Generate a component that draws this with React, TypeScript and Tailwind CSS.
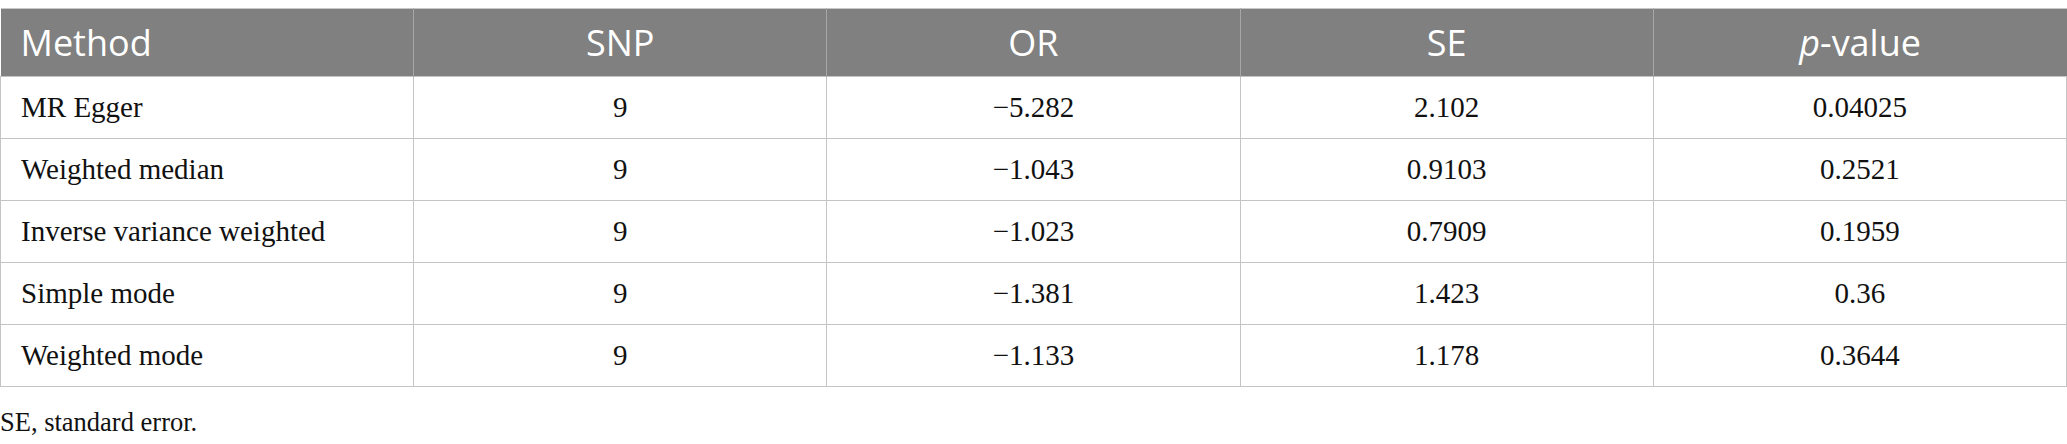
const rows = [
  { method: "MR Egger", snp: "9", or: "\u22125.282", se: "2.102", p: "0.04025" },
  { method: "Weighted median", snp: "9", or: "\u22121.043", se: "0.9103", p: "0.2521" },
  { method: "Inverse variance weighted", snp: "9", or: "\u22121.023", se: "0.7909", p: "0.1959" },
  { method: "Simple mode", snp: "9", or: "\u22121.381", se: "1.423", p: "0.36" },
  { method: "Weighted mode", snp: "9", or: "\u22121.133", se: "1.178", p: "0.3644" },
];

export default function App() {
  return (
    <div className="w-[2067px] h-[444px] bg-white pt-[8px]">
      <table className="w-full table-fixed border-collapse">
        <thead>
          <tr className="h-[68px] bg-[#808080] text-white text-[36px] font-['Open_Sans',sans-serif] border-t border-[#c8c8c8]">
            <th className="w-1/5 px-5 text-left font-normal border-r border-[#a6a6a6]">Method</th>
            <th className="w-1/5 font-normal border-r border-[#a6a6a6]">SNP</th>
            <th className="w-1/5 font-normal border-r border-[#a6a6a6]">OR</th>
            <th className="w-1/5 font-normal border-r border-[#a6a6a6]">SE</th>
            <th className="w-1/5 font-normal">
              <span className="italic">p</span>-value
            </th>
          </tr>
        </thead>
        <tbody className="text-[29px] text-[#111] font-['Liberation_Serif',serif]">
          {rows.map((r) => (
            <tr key={r.method} className="h-[62px]">
              <td className="px-5 border border-[#c4c4c4]">{r.method}</td>
              <td className="text-center border border-[#c4c4c4]">{r.snp}</td>
              <td className="text-center border border-[#c4c4c4]">{r.or}</td>
              <td className="text-center border border-[#c4c4c4]">{r.se}</td>
              <td className="text-center border border-[#c4c4c4]">{r.p}</td>
            </tr>
          ))}
        </tbody>
      </table>
      <p className="mt-[22px] text-[26.5px] text-[#111] font-['Liberation_Serif',serif] leading-none">SE, standard error.</p>
    </div>
  );
}
